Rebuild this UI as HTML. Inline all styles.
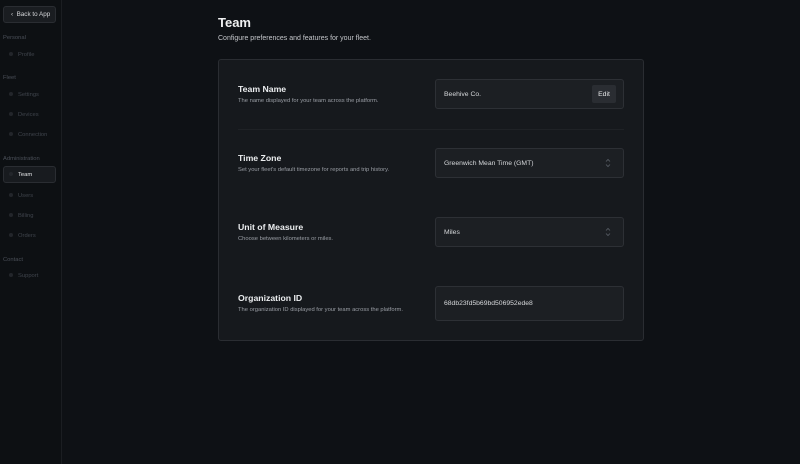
<!DOCTYPE html>
<html><head><style>
*{margin:0;padding:0;box-sizing:border-box}
body{width:800px;height:464px;background:#0e1115;font-family:"Liberation Sans",sans-serif;position:relative;overflow:hidden;color:#e6e7e9}
.sb{position:absolute;left:0;top:0;width:62px;height:464px;border-right:1px solid #1b1e22;background:#0d1013}
.back{position:absolute;left:3px;top:6px;width:53px;height:17px;border:1px solid #2a2d32;background:#1a1d21;border-radius:3px;font-size:6.3px;color:#d6d7da;line-height:16px;padding-left:7px}
.sec{position:absolute;left:3px;font-size:5.8px;color:#4a4f58}
.it{position:absolute;left:9px;font-size:5.8px;color:#3f444c}
.it:before{content:"";display:inline-block;width:4px;height:4px;border-radius:50%;background:#23262b;margin-right:5px;vertical-align:middle}
.act{position:absolute;left:3px;top:166px;width:53px;height:17px;border:1px solid #2a2d32;background:#181b1f;border-radius:3px}
h1{position:absolute;left:218px;top:15px;font-size:13px;font-weight:bold;color:#f0f1f2}
.sub{position:absolute;left:218px;top:35px;font-size:7px;color:#c4c6ca}
.card{position:absolute;left:218px;top:59px;width:426px;height:282px;background:#16191d;border:1px solid #2a2d32;border-radius:3px}
.lab{position:absolute;left:238px;font-size:8.7px;font-weight:bold;color:#eceef0}
.desc{position:absolute;left:238px;font-size:5.8px;color:#9a9ea5}
.inp{position:absolute;left:435px;width:189px;background:#1c1f23;border:1px solid #2d3035;border-radius:3px;font-size:6.8px;color:#d6d8db;padding-left:8px}
.ud{position:absolute;right:12px;top:50%;transform:translateY(-50%);width:6px;height:10px}
</style></head><body>
<div class="sb">
<div class="back">‹&nbsp;&nbsp;Back to App</div>
<div class="sec" style="top:35px">Personal</div>
<div class="it" style="top:52px">Profile</div>
<div class="sec" style="top:75px">Fleet</div>
<div class="it" style="top:92px">Settings</div>
<div class="it" style="top:112px">Devices</div>
<div class="it" style="top:132px">Connection</div>
<div class="sec" style="top:156px">Administration</div>
<div class="act"></div>
<div class="it" style="top:172px;color:#e6e7e9">Team</div>
<div class="it" style="top:193px">Users</div>
<div class="it" style="top:213px">Billing</div>
<div class="it" style="top:233px">Orders</div>
<div class="sec" style="top:257px">Contact</div>
<div class="it" style="top:273px">Support</div>
</div>
<h1>Team</h1>
<div class="sub">Configure preferences and features for your fleet.</div>
<div class="card"><div style="position:absolute;left:19px;right:19px;top:69px;height:1px;background:#1f2226"></div></div>
<div class="lab" style="top:84px">Team Name</div>
<div class="desc" style="top:98px">The name displayed for your team across the platform.</div>
<div class="inp" style="top:79px;height:30px;line-height:29px">Beehive Co.<div style="position:absolute;right:7px;top:5px;width:24px;height:18px;background:#2a2d32;border-radius:2px;line-height:19px;text-align:center;color:#e8e9eb">Edit</div></div>
<div class="lab" style="top:153px">Time Zone</div>
<div class="desc" style="top:167px">Set your fleet's default timezone for reports and trip history.</div>
<div class="inp" style="top:148px;height:30px;line-height:29px">Greenwich Mean Time (GMT)<svg class="ud" viewBox="0 0 6 10"><path d="M1 3.5L3 1.5L5 3.5M1 6.5L3 8.5L5 6.5" fill="none" stroke="#5a5f67" stroke-width="0.8"/></svg></div>
<div class="lab" style="top:222px">Unit of Measure</div>
<div class="desc" style="top:236px">Choose between kilometers or miles.</div>
<div class="inp" style="top:217px;height:30px;line-height:29px">Miles<svg class="ud" viewBox="0 0 6 10"><path d="M1 3.5L3 1.5L5 3.5M1 6.5L3 8.5L5 6.5" fill="none" stroke="#5a5f67" stroke-width="0.8"/></svg></div>
<div class="lab" style="top:293px">Organization ID</div>
<div class="desc" style="top:307px">The organization ID displayed for your team across the platform.</div>
<div class="inp" style="top:286px;height:35px;line-height:34px">68db23fd5b69bd506952ede8</div>
</body></html>
